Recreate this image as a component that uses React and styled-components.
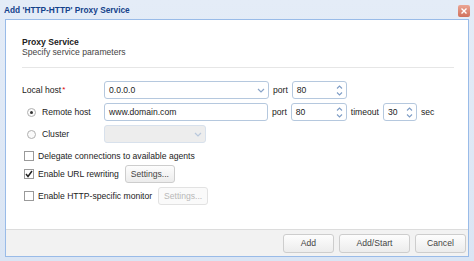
import React from "react";
import styled, { createGlobalStyle } from "styled-components";

const Global = createGlobalStyle`
  html, body {
    margin: 0;
    padding: 0;
    background: #dfe8f6;
  }
  body {
    font-family: "Liberation Sans", Arial, sans-serif;
    font-size: 8.6px;
    color: #222;
  }
`;

const Window = styled.div`
    width: 474px;
    height: 261px;
    box-sizing: border-box;
    background: linear-gradient(#e4ecf7, #dae5f4);
    display: flex;
    flex-direction: column;
    padding: 0 5px 4px 5px;
`;

const TitleBar = styled.div`
    height: 19px;
    display: flex;
    align-items: center;
    justify-content: space-between;
    margin-left: -1px;
`;

const Title = styled.div`
    font-weight: bold;
    font-size: 8.3px;
    color: #15428b;
    margin-top: 1px;
`;

const Close = styled.div`
    width: 12px;
    height: 12px;
    border-radius: 2px;
    background: linear-gradient(#eba594, #d0705b);
    display: flex;
    align-items: center;
    justify-content: center;
    margin-right: -1px;
    margin-top: 3px;
`;

const Panel = styled.div`
    flex: 1;
    display: flex;
    flex-direction: column;
    border: 1px solid #99bbe8;
    background: #fff;
`;

const Content = styled.div`
    flex: 1;
    padding: 17px 14px 0 16px;
`;

const Heading = styled.div`
    font-weight: bold;
    color: #222;
    line-height: 10px;
`;

const Sub = styled.div`
    color: #444;
    line-height: 10px;
`;

const Rule = styled.div`
    height: 1px;
    background: #e6e6e6;
    margin: 10px 0 13px 0;
`;

const Row = styled.div`
    display: flex;
    align-items: center;
    height: 18px;
    margin-bottom: ${p => p.gap ?? 4}px;
`;

const Label = styled.div`
    width: 82px;
    flex: none;
    color: #222;
    display: flex;
    align-items: center;
    gap: 6px;
    padding-left: ${p => p.indent ? 5 : 0}px;
    box-sizing: border-box;
`;

const Req = styled.span`
    color: #d00;
    font-size: 8px;
    vertical-align: top;
    margin-left: 1px;
`;

const Field = styled.div`
    width: ${p => p.w}px;
    height: 18px;
    box-sizing: border-box;
    border: 1px solid ${p => p.disabled ? "#d8e1ec" : "#b5c8de"};
    border-radius: 3px;
    background: ${p => p.disabled ? "#ededed" : "#fff"};
    display: flex;
    align-items: center;
    justify-content: space-between;
    padding: 0 3px 0 4px;
    color: #222;
    flex: none;
`;

const Unit = styled.span`
    color: #222;
    margin: 0 4px;
`;

const Radio = styled.span`
    width: 9px;
    height: 9px;
    border-radius: 50%;
    border: 1px solid #b0b0b0;
    background: #fafafa;
    box-sizing: border-box;
    display: inline-flex;
    align-items: center;
    justify-content: center;
    flex: none;
    &::after {
        content: "";
        width: 3px;
        height: 3px;
        border-radius: 50%;
        background: ${p => p.checked ? "#333" : "transparent"};
    }
`;

const CheckRow = styled.div`
    display: flex;
    align-items: center;
    height: ${p => p.h ?? 18}px;
    padding-left: 2px;
    gap: 4px;
`;

const Box = styled.span`
    width: 10px;
    height: 10px;
    border: 1px solid #9a9a9a;
    background: #fff;
    box-sizing: border-box;
    display: inline-flex;
    align-items: center;
    justify-content: center;
    flex: none;
`;

const Button = styled.div`
    width: ${p => p.w}px;
    height: 18px;
    box-sizing: border-box;
    border: 1px solid ${p => p.disabled ? "#e2e2e2" : "#cdcdcd"};
    border-radius: 3px;
    background: ${p => p.disabled ? "#fafafa" : "linear-gradient(#fdfdfd, #ececec)"};
    color: ${p => p.disabled ? "#b8b8b8" : "#444"};
    display: flex;
    align-items: center;
    justify-content: center;
    margin-left: ${p => p.ml ?? 0}px;
    flex: none;
`;

const Footer = styled.div`
    height: 26px;
    border-top: 1px solid #dcdcdc;
    background: #f2f2f2;
    display: flex;
    align-items: center;
    justify-content: flex-end;
    gap: 5px;
    padding-right: 2px;
`;

const FootButton = styled(Button)`
    height: 19px;
`;

const Chevron = ({ color = "#8aa4c8" }) => (
    <svg width="8" height="5" viewBox="0 0 8 5">
        <path d="M1 1 L4 4 L7 1" fill="none" stroke={color} strokeWidth="1.2" />
    </svg>
);

const SpinArrows = () => (
    <svg width="7" height="13" viewBox="0 0 7 13">
        <path d="M1 4.5 L3.5 2 L6 4.5" fill="none" stroke="#7f9dc6" strokeWidth="1.1" />
        <path d="M1 8.5 L3.5 11 L6 8.5" fill="none" stroke="#7f9dc6" strokeWidth="1.1" />
    </svg>
);

const Spinner = ({ w, value }) => (
    <Field w={w}>
        <span>{value}</span>
        <SpinArrows />
    </Field>
);

const Tick = () => (
    <svg width="8" height="8" viewBox="0 0 8 8">
        <path d="M1 4 L3 6.5 L7 1" fill="none" stroke="#222" strokeWidth="1.5" />
    </svg>
);

export default function App() {
    return (
        <>
            <Global />
            <Window>
                <TitleBar>
                    <Title>Add 'HTTP-HTTP' Proxy Service</Title>
                    <Close>
                        <svg width="6" height="6" viewBox="0 0 6 6">
                            <path d="M0.5 0.5 L5.5 5.5 M5.5 0.5 L0.5 5.5" stroke="#fff" strokeWidth="1.4" />
                        </svg>
                    </Close>
                </TitleBar>
                <Panel>
                    <Content>
                        <Heading>Proxy Service</Heading>
                        <Sub>Specify service parameters</Sub>
                        <Rule />
                        <Row>
                            <Label><span>Local host<Req>*</Req></span></Label>
                            <Field w={165}>
                                <span>0.0.0.0</span>
                                <Chevron />
                            </Field>
                            <Unit>port</Unit>
                            <Spinner w={55} value="80" />
                        </Row>
                        <Row>
                            <Label indent><Radio checked /> Remote host</Label>
                            <Field w={164}>
                                <span>www.domain.com</span>
                            </Field>
                            <Unit>port</Unit>
                            <Spinner w={56} value="80" />
                            <Unit>timeout</Unit>
                            <Spinner w={34} value="30" />
                            <Unit>sec</Unit>
                        </Row>
                        <Row gap={6}>
                            <Label indent><Radio /> Cluster</Label>
                            <Field w={102} disabled>
                                <span />
                                <Chevron color="#b9c8dc" />
                            </Field>
                        </Row>
                        <CheckRow h={14}>
                            <Box />
                            <span>Delegate connections to available agents</span>
                        </CheckRow>
                        <CheckRow h={22}>
                            <Box><Tick /></Box>
                            <span>Enable URL rewriting</span>
                            <Button w={50} ml={2}>Settings...</Button>
                        </CheckRow>
                        <CheckRow h={22}>
                            <Box />
                            <span>Enable HTTP-specific monitor</span>
                            <Button w={50} ml={2} disabled>Settings...</Button>
                        </CheckRow>
                    </Content>
                    <Footer>
                        <FootButton w={51}>Add</FootButton>
                        <FootButton w={71}>Add/Start</FootButton>
                        <FootButton w={51}>Cancel</FootButton>
                    </Footer>
                </Panel>
            </Window>
        </>
    );
}
